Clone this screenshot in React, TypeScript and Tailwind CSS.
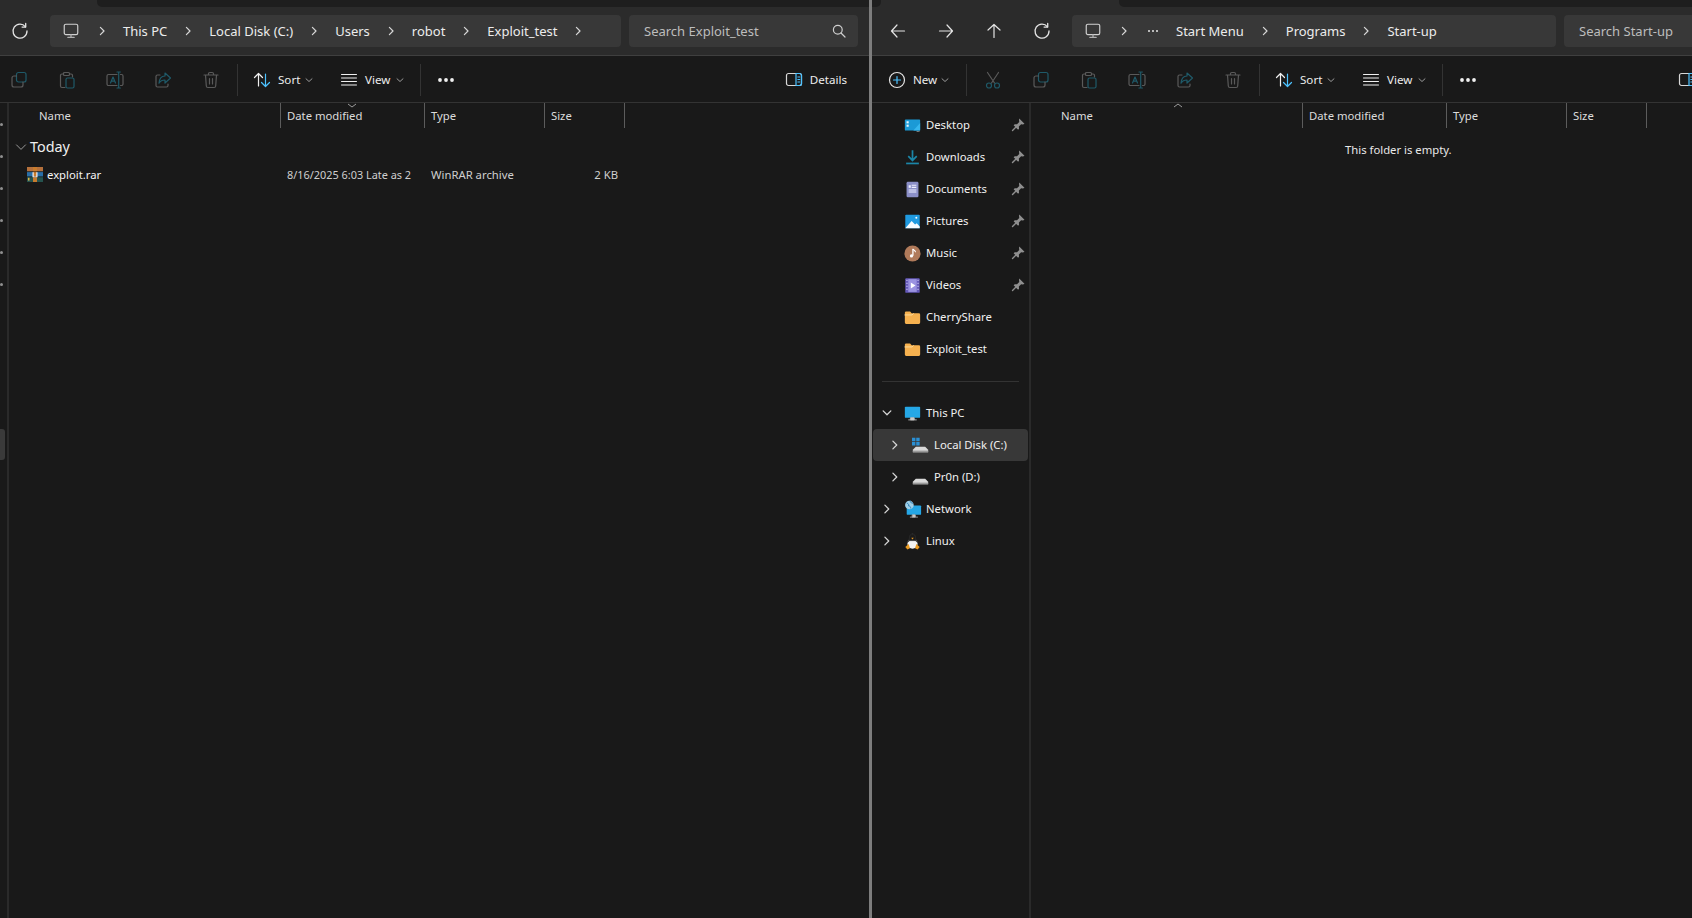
import type { ReactNode } from "react";

const TEAL = "#1f5a69";
const GRAY = "#5a5a5a";

function Ico({ children, size = 20, className = "" }: { children: ReactNode; size?: number; className?: string }) {
  return (
    <svg width={size} height={size} viewBox="0 0 20 20" fill="none" strokeWidth="1.2" strokeLinecap="round" strokeLinejoin="round" className={"shrink-0 " + className}>
      {children}
    </svg>
  );
}

const Chevron = () => (
  <Ico size={16}>
    <path d="M8 5.500 12.500 10 8 14.500" stroke="#d8d8d8" strokeWidth="1.500" />
  </Ico>
);

const SmallDown = () => (
  <Ico size={10}>
    <path d="M4 7.500 10 13l6-5.500" stroke="#a8a8a8" strokeWidth="1.800" />
  </Ico>
);

const Refresh = () => (
  <Ico>
    <path d="M15.500 5.800A7 7 0 1 0 17 10" stroke="#e4e4e4" strokeWidth="1.300" />
    <path d="M15.700 2.500v3.600h-3.600" stroke="#e4e4e4" strokeWidth="1.300" />
  </Ico>
);

const MonitorIcon = () => (
  <Ico size={18}>
    <rect x="2.500" y="2.500" width="15" height="11.500" rx="1.800" stroke="#d0d0d0" strokeWidth="1.300" />
    <path d="M10 14v3M6.500 17.200h7" stroke="#b0b0b0" strokeWidth="1.400" />
  </Ico>
);

const CopyIcon = () => (
  <Ico>
    <rect x="7.500" y="2.500" width="9.500" height="9.500" rx="2" stroke={TEAL} />
    <path d="M7.500 6H5a2 2 0 0 0-2 2v7a2 2 0 0 0 2 2h7a2 2 0 0 0 2-2v-3" stroke={GRAY} />
  </Ico>
);

const PasteIcon = () => (
  <Ico>
    <path d="M6 4H5a1.500 1.500 0 0 0-1.500 1.500V16A1.500 1.500 0 0 0 5 17.500h3M13 4h1a1.500 1.500 0 0 1 1.500 1.500V7" stroke={GRAY} />
    <rect x="6.500" y="2.500" width="6" height="3" rx="1" stroke={GRAY} />
    <rect x="9" y="8" width="8" height="10" rx="1.500" stroke={TEAL} />
  </Ico>
);

const RenameIcon = () => (
  <Ico>
    <path d="M12 4.500H3.500A1.500 1.500 0 0 0 2 6v8a1.500 1.500 0 0 0 1.500 1.500H12M15.500 4.500h1A1.500 1.500 0 0 1 18 6v8a1.500 1.500 0 0 1-1.500 1.500h-1" stroke={GRAY} />
    <path d="M13.700 2v16M12 2h3.400M12 18h3.400" stroke={TEAL} />
    <path d="M5.500 13 8 7l2.500 6M6.300 11.200h3.400" stroke={TEAL} />
  </Ico>
);

const ShareIcon = () => (
  <Ico>
    <path d="M7 5H4.500A1.500 1.500 0 0 0 3 6.500v9A1.500 1.500 0 0 0 4.500 17h9a1.500 1.500 0 0 0 1.500-1.500V14" stroke={GRAY} />
    <path d="M12 3l5.500 5-5.500 5v-3c-3 0-4.700 1-6 3.200C6.300 9 8.300 6.200 12 6z" stroke={TEAL} />
  </Ico>
);

const TrashIcon = () => (
  <Ico>
    <path d="M3 5h14M7.500 5V3.800A1.300 1.300 0 0 1 8.800 2.500h2.400a1.300 1.300 0 0 1 1.300 1.300V5M4.500 5l.8 11a1.600 1.600 0 0 0 1.600 1.500h6.200a1.600 1.600 0 0 0 1.600-1.500l.8-11M8.500 8.500v5.500M11.500 8.500v5.500" stroke={GRAY} />
  </Ico>
);

const CutIcon = () => (
  <Ico>
    <path d="M4.500 2.500 11.500 13M15.500 2.500 8.500 13" stroke={GRAY} />
    <circle cx="6" cy="15.500" r="2.500" stroke={TEAL} />
    <circle cx="14" cy="15.500" r="2.500" stroke={TEAL} />
  </Ico>
);

const SortIcon = () => (
  <Ico>
    <path d="M6.500 16V3.500M2.500 7.500l4-4 4 4" stroke="#f0f0f0" />
    <path d="M13.500 4v12.500M9.500 12.500l4 4 4-4" stroke="#4cc2ff" />
  </Ico>
);

const ViewIcon = () => (
  <Ico>
    <path d="M2.500 4.500h15M2.500 8h15M2.500 11.500h15M2.500 15h15" stroke="#f0f0f0" strokeWidth="1" />
  </Ico>
);

const Dots = () => (
  <svg width="18" height="6" viewBox="0 0 18 6" className="shrink-0">
    <circle cx="3" cy="3" r="1.900" fill="#f0f0f0" />
    <circle cx="9" cy="3" r="1.900" fill="#f0f0f0" />
    <circle cx="15" cy="3" r="1.900" fill="#f0f0f0" />
  </svg>
);

const DetailsIcon = () => (
  <Ico>
    <rect x="2.500" y="3.500" width="15" height="12" rx="2" stroke="#d8d8d8" />
    <path d="M12 3.500h3.500a2 2 0 0 1 2 2v8a2 2 0 0 1-2 2H12z" stroke="#4cc2ff" />
    <path d="M13.800 7h2M13.800 9.500h2M13.800 12h2" stroke="#4cc2ff" strokeWidth="1" />
  </Ico>
);

const Pin = () => (
  <Ico size={15} className="-mt-[2px]">
    <path d="M11 2 18 9l-2 1-2.500-.3-3 3 .2 3-1.200 1.300-6-6L5 9.600l3 .2 3-3L10.700 4z" fill="#8f8f8f" />
    <path d="M6 14 2 18" stroke="#8f8f8f" strokeWidth="1.800" />
  </Ico>
);

const Folder = () => (
  <Ico size={17}>
    <path d="M1 4.500A1.500 1.500 0 0 1 2.500 3h4.700L9 5h8.500A1.500 1.500 0 0 1 19 6.500V16a1.500 1.500 0 0 1-1.500 1.500h-15A1.500 1.500 0 0 1 1 16z" fill="#f6b14f" />
    <path d="M1 7h8.500L11 5.500" stroke="#ffe3a8" strokeWidth="1" />
  </Ico>
);

const DesktopIcon = () => (
  <Ico size={17}>
    <rect x="1" y="3" width="18" height="13" rx="1" fill="#1b9ad6" />
    <path d="M11 16 19 7v9z" fill="#36b7ee" />
    <rect x="3" y="5" width="2.500" height="2.500" fill="#e9f6fd" />
    <rect x="3" y="9" width="2.500" height="2.500" fill="#e9f6fd" />
    <rect x="15" y="16.500" width="1" height="1" fill="#d9d9d9" />
    <rect x="17" y="16.500" width="1" height="1" fill="#d9d9d9" />
  </Ico>
);

const DownloadsIcon = () => (
  <Ico size={17}>
    <path d="M10 1.500V13M5 8.500l5 5 5-5" stroke="#1b86a8" strokeWidth="2" strokeLinecap="butt" strokeLinejoin="miter" />
    <rect x="2.500" y="16" width="15" height="2" fill="#1b86a8" />
  </Ico>
);

const DocumentsIcon = () => (
  <Ico size={17}>
    <rect x="3" y="1" width="14" height="18" rx="1.500" fill="#8b8fc7" />
    <path d="M9 5h5.500M9 7.500h5.500M5.500 10.500h9M5.500 13h9" stroke="#eef0ff" strokeWidth="1.200" strokeLinecap="butt" />
    <rect x="5.500" y="5" width="2.500" height="3" fill="#eef0ff" />
  </Ico>
);

const PicturesIcon = () => (
  <Ico size={17}>
    <rect x="1.500" y="2" width="17" height="16" rx="1" fill="#1f9ae0" />
    <path d="M1.500 18 9 9.500l4 4 2-1.500 3.500 4v2z" fill="#f5fbff" />
    <circle cx="14.500" cy="5.500" r="1.200" fill="#f5fbff" />
  </Ico>
);

const MusicIcon = () => (
  <Ico size={17}>
    <circle cx="10" cy="10" r="9.500" fill="#b07a5a" />
    <path d="M10.500 5v7.500" stroke="#fff" strokeWidth="1.500" strokeLinecap="butt" />
    <path d="M10.500 5c1 1 2.500 1.500 3 3" stroke="#fff" strokeWidth="1.300" />
    <circle cx="8.800" cy="12.800" r="1.900" fill="#fff" />
  </Ico>
);

const VideosIcon = () => (
  <Ico size={17}>
    <rect x="1.500" y="1.500" width="17" height="17" rx="1" fill="#6458b8" />
    <rect x="5" y="2.500" width="10" height="15" fill="#9b93e0" />
    <path d="M8 6.500v7l5.500-3.500z" fill="#fff" />
    <path d="M3 4h1M3 7.500h1M3 11h1M3 14.500h1M16 4h1M16 7.500h1M16 11h1M16 14.500h1" stroke="#e8e6ff" strokeWidth="1.500" strokeLinecap="butt" />
  </Ico>
);

const PcIcon = () => (
  <Ico size={17}>
    <rect x="1" y="2" width="18" height="13" rx="1" fill="#25a7e6" />
    <path d="M8 15h4v2.500H8zM5.500 17.500h9" fill="#c9c9c9" stroke="#c9c9c9" strokeWidth="1" />
  </Ico>
);

function Drive({ win = false }: { win?: boolean }) {
  return (
    <Ico size={17}>
      <path d="M4.500 11.500h11l3.500 3.500v3H1v-3z" fill="#d9d9d9" />
      <path d="M1 16h18v2H1z" fill="#9a9a9a" />
      {win && <path d="M0 1h4v4H0zM5 1h4v4H5zM0 6h4v4H0zM5 6h4v4H5z" fill="#2a8fd4" />}
    </Ico>
  );
}

const NetworkIcon = () => (
  <Ico size={18}>
    <rect x="3" y="6" width="16" height="10.500" rx="1" fill="#25a7e6" />
    <path d="M9.500 16.500h3V19h-3zM7 19h8" fill="#c9c9c9" stroke="#c9c9c9" strokeWidth="0.800" />
    <circle cx="6" cy="5.500" r="4.800" fill="#9fcfe8" />
    <path d="M3.500 3.500c1.500.5 2 1.500 1.500 3 1.500 0 2.500 1 2.500 2.500M7 1c-.5 1.500.5 2 2.500 2.500" stroke="#2f7fb5" strokeWidth="1.100" />
  </Ico>
);

const LinuxIcon = () => (
  <Ico size={17}>
    <ellipse cx="10" cy="12.500" rx="6" ry="6" fill="#f2f2f2" />
    <path d="M10 1c-2.500 0-3.500 2-3.500 4.500 0 2-2 3.500-2.500 6l2.500-2.500h7l2.500 2.500c-.5-2.500-2.500-4-2.500-6C13.500 3 12.500 1 10 1z" fill="#1b1b1b" stroke="#3c3c3c" strokeWidth="0.500" />
    <path d="M8.500 5.500h3L10 7.500z" fill="#e99a22" />
    <path d="M1.500 16.500 5.500 13l1.500 5-3 1.500zM18.500 16.500 14.500 13 13 18l3 1.500z" fill="#e99a22" />
  </Ico>
);

const RarIcon = () => (
  <svg width="16" height="15" viewBox="0 0 16 16" preserveAspectRatio="none" className="-mt-[2px] shrink-0">
    <rect x="0" y="0" width="16" height="5" fill="#b5713c" />
    <rect x="0" y="5" width="16" height="5.500" fill="#2a6fa8" />
    <rect x="0" y="10.500" width="16" height="5.500" fill="#25534f" />
    <rect x="6" y="0" width="4" height="16" fill="#c87b2e" />
    <path d="M0 5h16M0 10.500h16" stroke="#1b1b1b" strokeWidth="0.700" />
    <path d="M5.500 5.500h1.200v4.500h2.600V5.500h1.200V11h-5z" fill="#f3f3f3" />
    <rect x="1" y="11.500" width="1.500" height="3" fill="#d9b34a" />
  </svg>
);

function Crumbs({ parts, trailing }: { parts: string[]; trailing?: boolean }) {
  return (
    <>
      {parts.map((p, i) => (
        <div key={p} className="flex items-center">
          <span className="pt-px">{p}</span>
          {(i < parts.length - 1 || trailing) && (
            <span className="flex w-[42px] justify-center"><Chevron /></span>
          )}
        </div>
      ))}
    </>
  );
}

function Search({ label, icon }: { label: string; icon?: boolean }) {
  return (
    <div className="flex h-8 w-[229px] shrink-0 items-center justify-between rounded-[4px] bg-[#383838] pl-[15px] pr-[11px] text-[13px] text-[#bdbdbd]">
      <span className="pt-px">{label}</span>
      {icon && (
        <Ico size={16}>
          <circle cx="8.500" cy="8.500" r="5.500" stroke="#cfcfcf" strokeWidth="1.500" />
          <path d="m12.500 12.500 5 5" stroke="#cfcfcf" strokeWidth="1.500" />
        </Ico>
      )}
    </div>
  );
}

const Sep = () => <div className="h-8 w-px shrink-0 bg-[#333333]" />;

function SortView() {
  return (
    <>
      <div className="ml-[14px] flex w-[87px] shrink-0 items-center">
        <SortIcon />
        <span className="ml-[6px] w-[24px]">Sort</span>
        <span className="ml-[2px]"><SmallDown /></span>
      </div>
      <div className="flex w-[81px] shrink-0 items-center">
        <ViewIcon />
        <span className="ml-[6px] w-[28px]">View</span>
        <span className="ml-[2px]"><SmallDown /></span>
      </div>
      <Sep />
      <div className="ml-4 flex w-4 shrink-0 justify-center pl-px"><Dots /></div>
    </>
  );
}

const IconSlot = ({ children }: { children: ReactNode }) => (
  <div className="flex w-8 shrink-0 justify-center">{children}</div>
);

function ColHead({ cols }: { cols: [string, number][] }) {
  return (
    <div className="flex h-[25px] text-[11.300px] text-[#dcdcdc]">
      {cols.map(([label, w], i) => (
        <div key={label} style={{ width: w }} className="flex shrink-0 items-center border-r border-[#5c5c5c] pt-[2px]">
          <span style={{ marginLeft: i === 0 ? 30 : 6 }}>{label}</span>
        </div>
      ))}
    </div>
  );
}

function LeftPane() {
  return (
    <div className="flex w-[869px] shrink-0 flex-col">
      <div className="h-[56px] shrink-0 border-b border-[#3f3f3f] bg-[#2b2b2b]">
        <div className="flex h-[7px]">
          <div className="ml-[97px] flex-1 rounded-bl-[5px] bg-[#1e1e1e]" />
        </div>
        <div className="mt-2 flex items-center">
          <div className="flex w-10 shrink-0 justify-center"><Refresh /></div>
          <div className="ml-[10px] flex h-8 w-[571px] shrink-0 items-center rounded-[4px] bg-[#383838] pl-3 text-[13px] text-[#ececec]">
            <MonitorIcon />
            <span className="flex w-[43px] justify-center"><Chevron /></span>
            <Crumbs parts={["This PC", "Local Disk (C:)", "Users", "robot", "Exploit_test"]} trailing />
          </div>
          <div className="ml-2"><Search label="Search Exploit_test" icon /></div>
        </div>
      </div>

      <div className="flex h-[47px] shrink-0 items-center border-b border-[#333333] pl-[3px] pt-[2px] text-[11.600px] text-[#ececec]">
        <div className="flex gap-4">
          <IconSlot><CopyIcon /></IconSlot>
          <IconSlot><PasteIcon /></IconSlot>
          <IconSlot><RenameIcon /></IconSlot>
          <IconSlot><ShareIcon /></IconSlot>
          <IconSlot><TrashIcon /></IconSlot>
        </div>
        <div className="ml-[10px]"><Sep /></div>
        <SortView />
        <div className="ml-auto flex items-center pr-[22px]">
          <DetailsIcon />
          <span className="ml-[6px]">Details</span>
        </div>
      </div>

      <div className="flex min-h-0 flex-1">
        <div className="w-[7px] shrink-0 overflow-hidden">
          <div className="flex flex-col items-start pt-[20px]">
            {[0, 1, 2, 3, 4, 5].map((n) => (
              <div key={n} className="mb-[29px] h-[3px] w-[3px] rounded-full bg-[#8f8f8f]" />
            ))}
            <div className="mt-[114px] h-[31px] w-[5px] rounded-r-[3px] bg-[#3a3a3a]" />
          </div>
        </div>
        <div className="w-[2px] shrink-0 bg-[#2a2a2a]" />
        <div className="relative min-w-0 flex-1">
          <ColHead cols={[["Name", 272], ["Date modified", 144], ["Type", 120], ["Size", 80]]} />
          <svg width="12" height="6" viewBox="0 0 12 6" className="absolute left-[337px] top-0">
            <path d="M2 1 6 4l4-3" stroke="#9a9a9a" fill="none" />
          </svg>
          <div className="mt-2 flex h-[22px] items-center pl-[6px] text-[14.400px] text-[#f0f0f0]">
            <Ico size={12}><path d="M2.500 6.500 10 14l7.500-7.500" stroke="#a8a8a8" strokeWidth="1.500" /></Ico>
            <span className="ml-[3px]">Today</span>
          </div>
          <div className="mt-[6px] flex h-[22px] items-center text-[11.300px]">
            <div className="flex w-[272px] shrink-0 items-center pl-[18px] text-[#f4f4f4]">
              <RarIcon />
              <span className="ml-[4px]">exploit.rar</span>
            </div>
            <div className="w-[144px] shrink-0 pl-[6px] text-[10.900px] text-[#cfcfcf]">8/16/2025 6:03 Late as 2</div>
            <div className="w-[120px] shrink-0 pl-[6px] text-[#cfcfcf]">WinRAR archive</div>
            <div className="w-[73px] shrink-0 text-right text-[#cfcfcf]">2 KB</div>
          </div>
        </div>
      </div>
    </div>
  );
}

const NAV: { label: string; icon: ReactNode; pin?: boolean }[] = [
  { label: "Desktop", icon: <DesktopIcon />, pin: true },
  { label: "Downloads", icon: <DownloadsIcon />, pin: true },
  { label: "Documents", icon: <DocumentsIcon />, pin: true },
  { label: "Pictures", icon: <PicturesIcon />, pin: true },
  { label: "Music", icon: <MusicIcon />, pin: true },
  { label: "Videos", icon: <VideosIcon />, pin: true },
  { label: "CherryShare", icon: <Folder /> },
  { label: "Exploit_test", icon: <Folder /> },
];

function TreeRow({ label, icon, level, open, selected }: { label: string; icon: ReactNode; level: number; open?: boolean; selected?: boolean }) {
  return (
    <div className={"mx-px flex h-8 items-center rounded-[4px] " + (selected ? "bg-[#383838]" : "")}>
      <div style={{ marginLeft: level === 1 ? 6 : 14 }} className="flex w-4 shrink-0 justify-center">
        <Ico size={14}>
          {open ? <path d="M4.500 7 10 12.500 15.500 7" stroke="#d8d8d8" strokeWidth="1.800" /> : <path d="M7 4.500 12.500 10 7 15.500" stroke="#d8d8d8" strokeWidth="1.800" />}
        </Ico>
      </div>
      <div className="ml-[9px] flex w-[17px] shrink-0 justify-center">{icon}</div>
      <span className="ml-[5px] text-[11.300px] text-[#f0f0f0]">{label}</span>
    </div>
  );
}

function RightPane() {
  return (
    <div className="flex min-w-0 flex-1 flex-col">
      <div className="h-[56px] shrink-0 border-b border-[#3f3f3f] bg-[#2b2b2b]">
        <div className="flex h-[7px]">
          <div className="w-[9px] rounded-br-[5px] bg-[#1e1e1e]" />
          <div className="ml-[238px] flex-1 rounded-bl-[5px] bg-[#1e1e1e]" />
        </div>
        <div className="mt-2 flex items-center pl-[2px]">
          <div className="flex w-12 shrink-0 justify-center">
            <Ico><path d="M16.500 10h-13M9 4 3.500 10 9 16" stroke="#e4e4e4" /></Ico>
          </div>
          <div className="flex w-12 shrink-0 justify-center">
            <Ico><path d="M3.500 10h13M11 4l5.500 6-5.500 6" stroke="#e4e4e4" /></Ico>
          </div>
          <div className="flex w-12 shrink-0 justify-center">
            <Ico><path d="M10 16.500v-13M4 9l6-5.500L16 9" stroke="#e4e4e4" /></Ico>
          </div>
          <div className="flex w-12 shrink-0 justify-center"><Refresh /></div>
          <div className="ml-[6px] flex h-8 w-[484px] shrink-0 items-center rounded-[4px] bg-[#383838] pl-3 text-[13px] text-[#ececec]">
            <MonitorIcon />
            <span className="flex w-[43px] justify-center"><Chevron /></span>
            <svg width="12" height="4" viewBox="0 0 12 4" className="ml-[2px] mr-[17px] shrink-0">
              <circle cx="2" cy="2" r="1" fill="#e4e4e4" />
              <circle cx="6" cy="2" r="1" fill="#e4e4e4" />
              <circle cx="10" cy="2" r="1" fill="#e4e4e4" />
            </svg>
            <Crumbs parts={["Start Menu", "Programs", "Start-up"]} />
          </div>
          <div className="ml-2"><Search label="Search Start-up" /></div>
        </div>
      </div>

      <div className="flex h-[47px] shrink-0 items-center border-b border-[#333333] pl-[15px] pt-[2px] text-[11.600px] text-[#ececec]">
        <div className="flex w-[79px] shrink-0 items-center">
          <Ico>
            <circle cx="10" cy="10" r="7.500" stroke="#e4e4e4" />
            <path d="M10 6.500v7M6.500 10h7" stroke="#4cc2ff" />
          </Ico>
          <span className="ml-[6px] w-[25px]">New</span>
          <span className="ml-[2px]"><SmallDown /></span>
        </div>
        <Sep />
        <div className="ml-[10px] flex gap-4">
          <IconSlot><CutIcon /></IconSlot>
          <IconSlot><CopyIcon /></IconSlot>
          <IconSlot><PasteIcon /></IconSlot>
          <IconSlot><RenameIcon /></IconSlot>
          <IconSlot><ShareIcon /></IconSlot>
          <IconSlot><TrashIcon /></IconSlot>
        </div>
        <div className="ml-[10px]"><Sep /></div>
        <SortView />
        <div className="ml-[202px] shrink-0"><DetailsIcon /></div>
      </div>

      <div className="flex min-h-0 flex-1">
        <div className="w-[157px] shrink-0 pt-[6px]">
          {NAV.map((n) => (
            <div key={n.label} className="flex h-8 items-center pl-[32px] pr-[3px]">
              <div className="flex w-[17px] shrink-0 justify-center">{n.icon}</div>
              <span className="ml-[5px] flex-1 text-[11.300px] text-[#f0f0f0]">{n.label}</span>
              {n.pin && <Pin />}
            </div>
          ))}
          <div className="mx-[10px] mb-[15px] mt-4 h-px bg-[#333333]" />
          <TreeRow label="This PC" icon={<PcIcon />} level={1} open />
          <TreeRow label="Local Disk (C:)" icon={<Drive win />} level={2} selected />
          <TreeRow label="Pr0n (D:)" icon={<Drive />} level={2} />
          <TreeRow label="Network" icon={<NetworkIcon />} level={1} />
          <TreeRow label="Linux" icon={<LinuxIcon />} level={1} />
        </div>
        <div className="w-[2px] shrink-0 bg-[#2a2a2a]" />
        <div className="relative min-w-0 flex-1">
          <ColHead cols={[["Name", 272], ["Date modified", 144], ["Type", 120], ["Size", 80]]} />
          <svg width="12" height="6" viewBox="0 0 12 6" className="absolute left-[141px] top-0">
            <path d="M2 4 6 1l4 3" stroke="#9a9a9a" fill="none" />
          </svg>
          <p className="ml-[314px] mt-[14px] text-[11.300px] text-[#e8e8e8]">This folder is empty.</p>
        </div>
      </div>
    </div>
  );
}

export default function App() {
  return (
    <div className="flex h-[918px] w-[1692px] overflow-hidden bg-[#191919] font-['Noto_Sans',sans-serif]">
      <LeftPane />
      <div className="w-[3px] shrink-0 bg-[#7d7d7d]" />
      <RightPane />
    </div>
  );
}
